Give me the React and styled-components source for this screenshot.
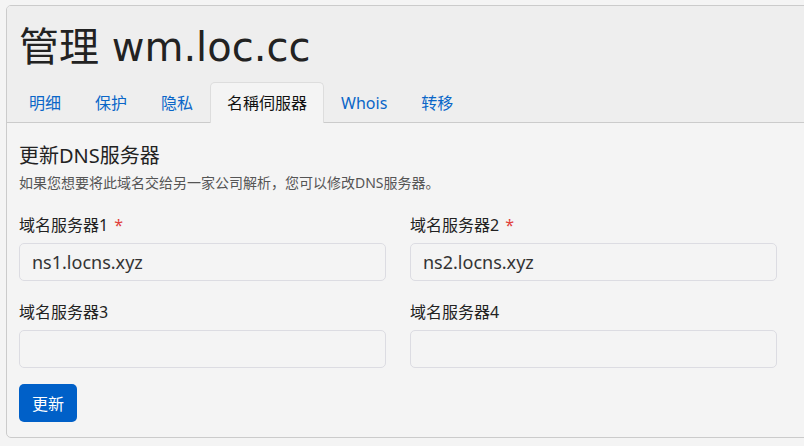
import React from "react";
import styled, { createGlobalStyle } from "styled-components";

const GlobalStyle = createGlobalStyle`
  html, body {
    margin: 0;
    padding: 0;
    background: #f4f4f4;
    overflow: hidden;
  }
  body {
    font-family: "Noto Sans", "Noto Sans CJK SC", sans-serif;
    color: #222;
  }
  * { box-sizing: border-box; }
`;

const Page = styled.div`
  padding: 5px 0 0 6px;
`;

const Card = styled.div`
  width: 830px;
  border: 1px solid #cbcbcb;
  border-radius: 5px;
  background: #f4f4f4;
  overflow: hidden;
`;

const Header = styled.div`
  background: #eeeeee;
  border-bottom: 1px solid #cbcbcb;
  padding: 18px 12px 0;
`;

const Title = styled.h1`
  margin: 0 0 12px;
  font-size: 40px;
  line-height: 46px;
  font-weight: 400;
  color: #222;
  font-family: "DejaVu Sans", "Noto Sans CJK SC", sans-serif;
`;

const Tabs = styled.nav`
  display: flex;
  margin: 0 0 -1px -7px;
`;

const Tab = styled.a`
  display: block;
  padding: 8px 16px;
  font-size: 16px;
  line-height: 24px;
  border: 1px solid transparent;
  border-bottom: none;
  border-radius: 5px 5px 0 0;
  text-decoration: none;
  color: ${(p) => (p.$active ? "#111" : "#0a66c8")};
  background: ${(p) => (p.$active ? "#f4f4f4" : "transparent")};
  border-color: ${(p) => (p.$active ? "#dddddd" : "transparent")};
  height: 41px;
  cursor: pointer;
`;

const Body = styled.div`
  padding: 21px 12px 15px;
`;

const Heading = styled.h2`
  margin: 0;
  font-size: 20px;
  line-height: 24px;
  font-weight: 400;
  color: #222;
`;

const Hint = styled.p`
  margin: 6px 0 0;
  font-size: 14px;
  line-height: 18px;
  color: #555;
`;

const Grid = styled.div`
  display: grid;
  grid-template-columns: 367px 367px;
  column-gap: 24px;
  row-gap: 20px;
  margin-top: 22px;
`;

const Field = styled.div`
  display: flex;
  flex-direction: column;
  gap: 7px;
`;

const Label = styled.label`
  font-size: 16px;
  line-height: 22px;
  color: #222;
`;

const Star = styled.span`
  color: #e0403a;
  margin-left: 6px;
`;

const Input = styled.input`
  height: 38px;
  width: 100%;
  padding: 0 12px;
  border: 1px solid #dcdce2;
  border-radius: 5px;
  background: #f4f4f4;
  font-family: "Noto Sans", "Noto Sans CJK SC", sans-serif;
  font-size: 18px;
  color: #333;
  outline: none;
`;

const Button = styled.button`
  margin-top: 16px;
  height: 38px;
  padding: 0 13px;
  border: none;
  border-radius: 5px;
  background: #0060c8;
  color: #fff;
  font-family: "Noto Sans", "Noto Sans CJK SC", sans-serif;
  font-size: 16px;
  cursor: pointer;
`;

const tabs = ["明细", "保护", "隐私", "名稱伺服器", "Whois", "转移"];
const fields = [
  { label: "域名服务器1", required: true, value: "ns1.locns.xyz" },
  { label: "域名服务器2", required: true, value: "ns2.locns.xyz" },
  { label: "域名服务器3", required: false, value: "" },
  { label: "域名服务器4", required: false, value: "" },
];

export default function App() {
  return (
    <>
      <GlobalStyle />
      <Page>
        <Card>
          <Header>
            <Title>管理 wm.loc.cc</Title>
            <Tabs>
              {tabs.map((t) => (
                <Tab key={t} $active={t === "名稱伺服器"}>
                  {t}
                </Tab>
              ))}
            </Tabs>
          </Header>
          <Body>
            <Heading>更新DNS服务器</Heading>
            <Hint>如果您想要将此域名交给另一家公司解析，您可以修改DNS服务器。</Hint>
            <Grid>
              {fields.map((f) => (
                <Field key={f.label}>
                  <Label>
                    {f.label}
                    {f.required && <Star>*</Star>}
                  </Label>
                  <Input defaultValue={f.value} />
                </Field>
              ))}
            </Grid>
            <Button>更新</Button>
          </Body>
        </Card>
      </Page>
    </>
  );
}
